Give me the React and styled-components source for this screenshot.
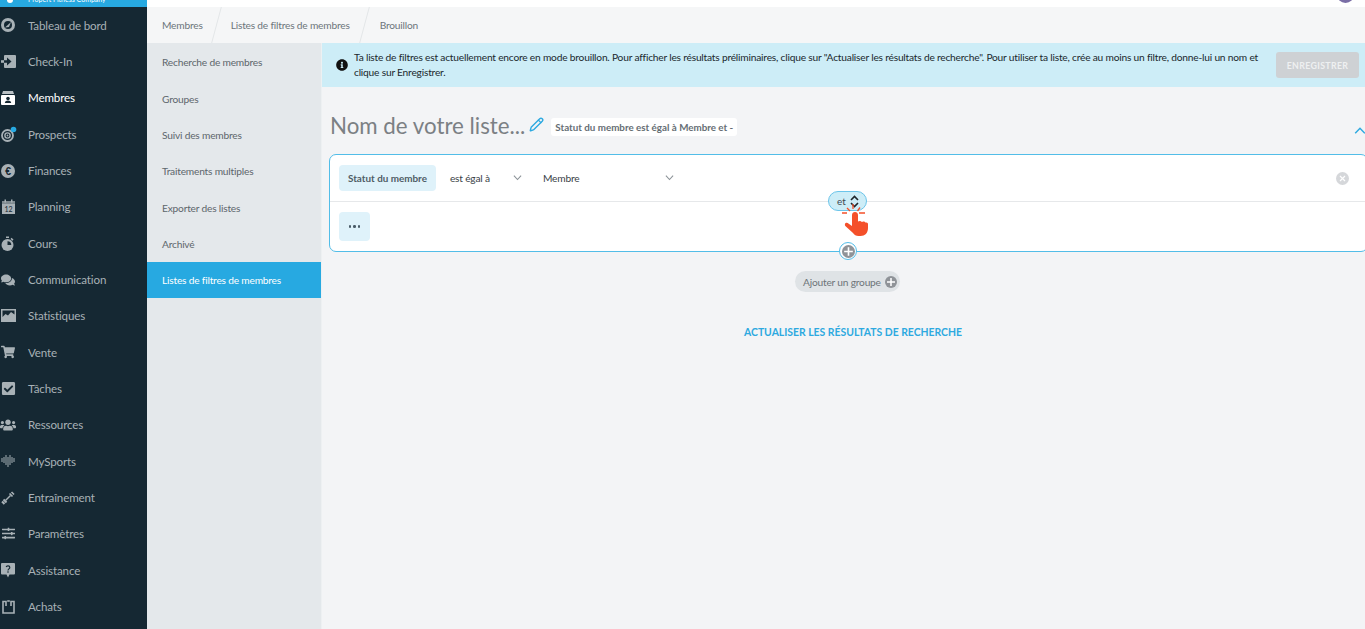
import React from 'react';
import styled, { createGlobalStyle } from 'styled-components';
import {
  FaComments,
  FaShoppingCart,
  FaCheckSquare,
  FaUsers,
  FaSlidersH,
  FaInfoCircle,
} from 'react-icons/fa';
import { Pencil } from 'lucide-react';

const GlobalStyle = createGlobalStyle`
  html, body {
    margin: 0;
    height: 100%;
    overflow: hidden;
    background: #f3f4f6;
  }
  * { box-sizing: border-box; }
  body {
    font-family: 'Lato', 'Open Sans', sans-serif;
  }
`;

const Page = styled.div`
  display: grid;
  grid-template-columns: 147px 1fr;
  height: 629px;
  width: 1365px;
  overflow: hidden;
`;

const Sidebar = styled.aside`
  background: #152833;
  display: flex;
  flex-direction: column;
`;

const Brand = styled.div`
  height: 7px;
  background: #27a9e1;
  overflow: hidden;
  color: #fff;
  font-size: 7px;
  line-height: 8px;
  padding-left: 28px;
  white-space: nowrap;
  position: relative;

  span { display: block; margin-top: -5px; }
`;

const BrandDot = styled.i`
  position: absolute;
  left: 7px;
  top: -3px;
  width: 6px;
  height: 6px;
  border-radius: 50%;
  background: #fff;
`;

const NavList = styled.nav`
  display: flex;
  flex-direction: column;
`;

const NavItem = styled.a`
  display: flex;
  align-items: center;
  height: 36.35px;
  padding-left: 1px;
  gap: 13px;
  color: ${p => (p.$active ? '#ffffff' : '#a8b1b6')};
  font-size: 11.6px;
  letter-spacing: -0.15px;
  white-space: nowrap;
`;

const IconBox = styled.span`
  width: 14px;
  height: 16px;
  flex: none;
  display: flex;
  align-items: center;
  justify-content: center;
  color: ${p => (p.$active ? '#ffffff' : '#a8b1b6')};

  svg { display: block; overflow: visible; }
`;

const Content = styled.div`
  display: flex;
  flex-direction: column;
  min-width: 0;
`;

const TopBar = styled.div`
  height: 7px;
  background: #fff;
  position: relative;
  overflow: hidden;
  flex: none;
`;

const Avatar = styled.i`
  position: absolute;
  right: 11px;
  top: -14px;
  width: 17px;
  height: 17px;
  border-radius: 50%;
  background: #7a6ea6;
`;

const Breadcrumbs = styled.div`
  height: 36px;
  flex: none;
  background: #f5f6f7;
  display: flex;
  align-items: center;
  color: #6c757b;
  font-size: 10.2px;
  letter-spacing: -0.2px;
`;

const Crumb = styled.span`
  position: relative;
  height: 100%;
  display: flex;
  align-items: center;
  padding: 0 15px;
  white-space: nowrap;

  &:first-child { padding-right: 14px; }
  &:nth-child(2) { padding-left: 14px; }

  &::after {
    content: '';
    display: ${p => (p.$last ? 'none' : 'block')};
    position: absolute;
    right: 0;
    top: 0;
    bottom: 0;
    width: 1px;
    background: #e3e6e8;
    transform: skewX(-15deg);
  }
`;

const Body = styled.div`
  flex: 1;
  display: grid;
  grid-template-columns: 175px 1fr;
  min-height: 0;
`;

const SubNav = styled.nav`
  background: #e4e8eb;
  border-right: 1px solid #edf0f2;
  display: flex;
  flex-direction: column;
  padding-top: 1px;
`;

const SubItem = styled.a`
  height: 36.35px;
  display: flex;
  align-items: center;
  padding-left: 15px;
  font-size: 10.2px;
  letter-spacing: -0.2px;
  white-space: nowrap;
  background: ${p => (p.$active ? '#27a9e1' : 'transparent')};
  color: ${p => (p.$active ? '#ffffff' : '#5d666c')};
`;

const Main = styled.main`
  display: flex;
  flex-direction: column;
  min-width: 0;
  background: #f3f4f6;
`;

const Banner = styled.div`
  height: 44px;
  flex: none;
  background: #cdedf7;
  display: flex;
  align-items: center;
  padding: 0 6px 0 14px;
  gap: 6px;
  color: #20282d;
  font-size: 10.2px;
  letter-spacing: -0.2px;
  line-height: 15px;
`;

const BannerText = styled.p`
  margin: 0;
  flex: 1;
  padding-right: 8px;
`;

const SaveButton = styled.button`
  width: 83px;
  height: 26px;
  flex: none;
  border: 0;
  border-radius: 3px;
  background: #ced1d4;
  color: #eef0f1;
  font: 700 8.8px 'Lato', sans-serif;
  letter-spacing: 0.35px;
  padding: 0;
`;

const TitleRow = styled.div`
  display: flex;
  align-items: center;
  height: 67px;
  padding: 12px 0 0 8px;
  position: relative;
`;

const Title = styled.h1`
  margin: 0 0 2px;
  font-weight: 400;
  font-size: 22.3px;
  color: #7b8084;
  white-space: nowrap;
`;

const EditIcon = styled.span`
  color: #2da9e0;
  margin: 0 7px 4px 4px;
  display: flex;
`;

const Summary = styled.span`
  background: #fff;
  border-radius: 3px;
  height: 18px;
  padding: 0 4px;
  display: flex;
  align-items: center;
  color: #666e74;
  font-size: 9.8px;
  font-weight: 700;
  white-space: nowrap;
`;

const Collapse = styled.span`
  position: absolute;
  right: -1px;
  top: 40px;
  color: #2da9e0;
  display: flex;
`;

const FilterCard = styled.section`
  margin: 0 -3px 0 7px;
  height: 98px;
  flex: none;
  background: #fff;
  border: 1px solid #52bde8;
  border-radius: 7px;
  position: relative;
  display: flex;
  flex-direction: column;
`;

const FilterRow = styled.div`
  height: 47px;
  flex: none;
  border-bottom: 1px solid #e6e8ea;
  display: flex;
  align-items: center;
  padding: 0 0 0 9px;
  position: relative;
`;

const FieldChip = styled.span`
  background: #dff2fa;
  color: #4f5d66;
  border-radius: 4px;
  height: 26px;
  padding: 0 9px;
  display: flex;
  align-items: center;
  font-size: 9.9px;
  font-weight: 700;
  white-space: nowrap;
`;

const Select = styled.span`
  width: ${p => p.$w}px;
  margin-left: ${p => p.$ml}px;
  display: flex;
  justify-content: space-between;
  align-items: center;
  font-size: 10.2px;
  letter-spacing: -0.2px;
  color: #3a4247;
  white-space: nowrap;

  svg { color: #8b9297; flex: none; }
`;

const ClearIcon = styled.span`
  position: absolute;
  right: 18px;
  top: 17px;
  width: 13px;
  height: 13px;
  border-radius: 50%;
  background: #d5d7da;
  display: flex;
`;

const MoreRow = styled.div`
  flex: 1;
  padding: 10px 9px;
`;

const MoreButton = styled.button`
  width: 31px;
  height: 29px;
  border: 0;
  border-radius: 4px;
  background: #dff2fa;
  display: flex;
  align-items: center;
  justify-content: center;
  gap: 2px;
  padding: 0;
`;

const MoreDot = styled.i`
  width: 2.4px;
  height: 2.4px;
  border-radius: 50%;
  background: #4a5c68;
`;

const AndToggle = styled.span`
  position: absolute;
  left: 498px;
  top: 36px;
  width: 39px;
  height: 20px;
  border: 1px solid #6cc5ea;
  border-radius: 10px;
  background: #cdedf7;
  color: #3f4a50;
  font-size: 10px;
  display: flex;
  align-items: center;
  padding-left: 8px;
  gap: 4px;
`;

const HandCursor = styled.span`
  position: absolute;
  left: 512px;
  top: 49px;
  display: flex;
`;

const AddRound = styled.span`
  position: absolute;
  left: 509px;
  bottom: -9px;
  width: 18px;
  height: 18px;
  border-radius: 50%;
  background: #fff;
  border: 1px solid #52bde8;
  display: flex;
  align-items: center;
  justify-content: center;
`;

const GroupRow = styled.div`
  display: flex;
  justify-content: center;
  margin: 19px 0 0 0;
  padding-left: 8px;
`;

const GroupButton = styled.span`
  height: 21px;
  width: 105px;
  border-radius: 10.5px;
  background: #dfe3e6;
  color: #6d7479;
  font-size: 10.2px;
  letter-spacing: -0.2px;
  display: flex;
  align-items: center;
  justify-content: space-between;
  padding: 0 3px 0 8px;
  white-space: nowrap;
`;

const RefreshLink = styled.a`
  margin-top: 34px;
  padding-left: 19px;
  text-align: center;
  color: #2da9e0;
  font-size: 10.4px;
  font-weight: 700;
  white-space: nowrap;
`;

const Gauge = () => (
  <svg width="14" height="14" viewBox="0 0 14 14">
    <circle cx="7" cy="7" r="7" fill="currentColor" />
    <circle cx="7" cy="7" r="4" fill="#152833" />
    <path d="M4 9.5 L10 4 L8 9 Z" fill="currentColor" />
  </svg>
);

const CheckIn = () => (
  <svg width="15" height="13" viewBox="0 0 15 13">
    <rect x="3" width="12" height="13" rx="1" fill="currentColor" />
    <path d="M0 5.200h6V2.500l4.500 4-4.500 4V7.800H0z" fill="#152833" />
    <path d="M0 5.200h3v2.600H0z" fill="currentColor" />
  </svg>
);

const MemberCard = () => (
  <svg width="14" height="14" viewBox="0 0 14 14">
    <path d="M2 0h10l1 3H1z" fill="#b9c0c4" />
    <rect y="4" width="14" height="10" rx="1" fill="currentColor" />
    <circle cx="7" cy="7.500" r="1.800" fill="#152833" />
    <path d="M3.800 12c.3-2 1.600-2.600 3.200-2.600s2.900.6 3.200 2.600z" fill="#152833" />
  </svg>
);

const Target = () => (
  <svg width="15" height="15" viewBox="0 0 15 15">
    <circle cx="6.500" cy="8.500" r="5.500" fill="none" stroke="currentColor" strokeWidth="1.800" />
    <circle cx="6.500" cy="8.500" r="2.600" fill="none" stroke="currentColor" strokeWidth="1.400" />
    <circle cx="6.500" cy="8.500" r="0.900" fill="currentColor" />
    <circle cx="12.500" cy="2.500" r="2.800" fill="#27a9e1" />
  </svg>
);

const Euro = () => (
  <svg width="14" height="14" viewBox="0 0 14 14">
    <circle cx="7" cy="7" r="7" fill="currentColor" />
    <text x="7" y="10.600" textAnchor="middle" fontSize="10.500" fontWeight="700" fontFamily="'Liberation Sans', sans-serif" fill="#152833">€</text>
  </svg>
);

const Calendar = () => (
  <svg width="13" height="15" viewBox="0 0 13 15">
    <path d="M0 2h13v3H0z" fill="#7f8b91" />
    <path d="M2.500 0.500h1.500v3H2.500zM9 0.500h1.500v3H9z" fill="currentColor" />
    <rect y="5" width="13" height="10" fill="#a8b1b6" />
    <text x="6.500" y="13" textAnchor="middle" fontSize="7" fill="#152833">12</text>
  </svg>
);

const Stopwatch = () => (
  <svg width="14" height="15" viewBox="0 0 14 15">
    <circle cx="6.500" cy="9" r="6" fill="currentColor" />
    <path d="M6.500 9V5.200A3.800 3.800 0 0 1 10.300 9z" fill="#152833" />
    <path d="M5 0.500h3v1.600H5zM10.500 1.800l2 1.800-1 1.100-2-1.800z" fill="currentColor" />
  </svg>
);

const AreaChart = () => (
  <svg width="15" height="13" viewBox="0 0 15 13">
    <path d="M0 0h15v13H0z" fill="currentColor" />
    <path d="M1.500 1.500h12v4L10 3 7 6.500 4.500 5l-3 3z" fill="#152833" />
  </svg>
);

const heartColumns = [
  [1, [4, 6]],
  [3, [3, 5, 7]],
  [5, [1, 3, 5, 7, 9]],
  [7, [3, 5, 7, 9, 11]],
  [9, [1, 3, 5, 7, 9]],
  [11, [3, 5, 7]],
  [13, [4, 6]],
];

const Heart = () => (
  <svg width="14" height="13" viewBox="0 0 14 13" fill="currentColor">
    {heartColumns.flatMap(([x, rows]) =>
      rows.map(y => <rect key={`${x}-${y}`} x={x - 0.7} y={y - 0.7} width="1.400" height="1.400" />)
    )}
  </svg>
);

const Dumbbell = () => (
  <svg width="14" height="14" viewBox="0 0 14 14" fill="none" stroke="currentColor">
    <path d="M4.500 9.500l5-5" strokeWidth="1.500" />
    <path d="M1 10.500 3.500 13M2.500 8.500l3 3" strokeWidth="2" />
    <path d="M8.500 2.500l3 3M10.500 1 13 3.500" strokeWidth="1.700" />
  </svg>
);

const Help = () => (
  <svg width="14" height="15" viewBox="0 0 14 15">
    <path d="M1 0h12a1 1 0 0 1 1 1v9.500a1 1 0 0 1-1 1H8.500L7 14.500l-1.500-3H1a1 1 0 0 1-1-1V1a1 1 0 0 1 1-1z" fill="currentColor" />
    <path d="M5.200 4c.4-1.500 3.600-1.500 3.600.5 0 1.400-1.800 1.400-1.800 3M7 8.300v1.500" fill="none" stroke="#152833" strokeWidth="1.200" />
  </svg>
);

const Shop = () => (
  <svg width="13" height="14" viewBox="0 0 13 14" fill="none" stroke="currentColor" strokeWidth="1.600">
    <path d="M1 6v7h11V6" />
    <path d="M1 6V1.500h3V6M9 6V1.500h3V6" />
    <path d="M5.200 1h2.600" />
  </svg>
);

const Chevron = ({ up, size = 10 }) => (
  <svg width={size} height={size * 0.6} viewBox="0 0 10 6" fill="none" stroke="currentColor" strokeWidth="1.200">
    <path d={up ? 'M1 5.300 5 1l4 4.300' : 'M1 .7 5 5l4-4.300'} />
  </svg>
);

const PlusDisc = ({ size = 12 }) => (
  <svg width={size} height={size} viewBox="0 0 12 12">
    <circle cx="6" cy="6" r="6" fill="#8f9398" />
    <path d="M6 2v8M2 6h8" stroke="#fff" strokeWidth="1.500" />
  </svg>
);

const Hand = () => (
  <svg width="28" height="33" viewBox="0 0 28 33">
    <path d="M0 9h5M17 9h6M5 4l3 3M18 3.500 15.500 7M11 0v5" stroke="#f4502a" strokeWidth="1.300" fill="none" />
    <path
      d="M10 11c0-1.700 1.300-3 3-3s3 1.300 3 3v6.500c.5-.4 1.100-.6 1.800-.6.900 0 1.600.4 2 1 .4-.3 1-.5 1.600-.5 1 0 1.700.5 2.100 1.200.3-.1.600-.2 1-.2.900 0 1.500.7 1.500 1.800V24c0 5-3 8-7.500 8h-2c-2.500 0-4.200-1-5.500-3L3.300 22c-.7-1-.5-2.200.4-2.900.9-.6 2-.4 2.700.4L10 22z"
      fill="#f4502a"
    />
  </svg>
);

const UpDown = () => (
  <svg width="9" height="13" viewBox="0 0 9 13" fill="none" stroke="#1f262b" strokeWidth="1.600">
    <path d="M1 5l3.500-3.500L8 5M1 8l3.500 3.500L8 8" />
  </svg>
);

const navItems = [
  { label: 'Tableau de bord', icon: <Gauge /> },
  { label: 'Check-In', icon: <CheckIn /> },
  { label: 'Membres', icon: <MemberCard />, active: true },
  { label: 'Prospects', icon: <Target /> },
  { label: 'Finances', icon: <Euro /> },
  { label: 'Planning', icon: <Calendar /> },
  { label: 'Cours', icon: <Stopwatch /> },
  { label: 'Communication', icon: <FaComments size={14} /> },
  { label: 'Statistiques', icon: <AreaChart /> },
  { label: 'Vente', icon: <FaShoppingCart size={14} /> },
  { label: 'Tâches', icon: <FaCheckSquare size={15} /> },
  { label: 'Ressources', icon: <FaUsers size={16} /> },
  { label: 'MySports', icon: <Heart /> },
  { label: 'Entraînement', icon: <Dumbbell /> },
  { label: 'Paramètres', icon: <FaSlidersH size={13} /> },
  { label: 'Assistance', icon: <Help /> },
  { label: 'Achats', icon: <Shop /> },
];

const subItems = [
  'Recherche de membres',
  'Groupes',
  'Suivi des membres',
  'Traitements multiples',
  'Exporter des listes',
  'Archivé',
  'Listes de filtres de membres',
];

export default function App() {
  return (
    <Page>
      <GlobalStyle />
      <Sidebar>
        <Brand>
          <BrandDot />
          <span>Propert Fitness Company</span>
        </Brand>
        <NavList>
          {navItems.map(item => (
            <NavItem key={item.label} $active={item.active}>
              <IconBox $active={item.active}>{item.icon}</IconBox>
              {item.label}
            </NavItem>
          ))}
        </NavList>
      </Sidebar>

      <Content>
        <TopBar>
          <Avatar />
        </TopBar>
        <Breadcrumbs>
          <Crumb>Membres</Crumb>
          <Crumb>Listes de filtres de membres</Crumb>
          <Crumb $last>Brouillon</Crumb>
        </Breadcrumbs>
        <Body>
          <SubNav>
            {subItems.map(label => (
              <SubItem key={label} $active={label === 'Listes de filtres de membres'}>
                {label}
              </SubItem>
            ))}
          </SubNav>
          <Main>
            <Banner>
              <FaInfoCircle size={12} color="#111" style={{ flex: 'none' }} />
              <BannerText>
                Ta liste de filtres est actuellement encore en mode brouillon. Pour afficher les résultats préliminaires, clique sur "Actualiser les résultats de recherche". Pour utiliser ta liste, crée au moins un filtre, donne-lui un nom et clique sur Enregistrer.
              </BannerText>
              <SaveButton>ENREGISTRER</SaveButton>
            </Banner>
            <TitleRow>
              <Title>Nom de votre liste...</Title>
              <EditIcon>
                <Pencil size={15} strokeWidth={2.2} />
              </EditIcon>
              <Summary>Statut du membre est égal à Membre et -</Summary>
              <Collapse>
                <Chevron up size={12} />
              </Collapse>
            </TitleRow>
            <FilterCard>
              <FilterRow>
                <FieldChip>Statut du membre</FieldChip>
                <Select $w={72} $ml={14}>
                  est égal à
                  <Chevron size={9} />
                </Select>
                <Select $w={131} $ml={21}>
                  Membre
                  <Chevron size={9} />
                </Select>
                <ClearIcon>
                  <svg width="13" height="13" viewBox="0 0 13 13" stroke="#fff" strokeWidth="1.200">
                    <path d="M4 4l5 5M9 4l-5 5" />
                  </svg>
                </ClearIcon>
              </FilterRow>
              <MoreRow>
                <MoreButton>
                  <MoreDot />
                  <MoreDot />
                  <MoreDot />
                </MoreButton>
              </MoreRow>
              <AndToggle>
                et
                <UpDown />
              </AndToggle>
              <HandCursor>
                <Hand />
              </HandCursor>
              <AddRound>
                <PlusDisc size={13} />
              </AddRound>
            </FilterCard>
            <GroupRow>
              <GroupButton>
                Ajouter un groupe
                <PlusDisc size={12} />
              </GroupButton>
            </GroupRow>
            <RefreshLink>ACTUALISER LES RÉSULTATS DE RECHERCHE</RefreshLink>
          </Main>
        </Body>
      </Content>
    </Page>
  );
}
